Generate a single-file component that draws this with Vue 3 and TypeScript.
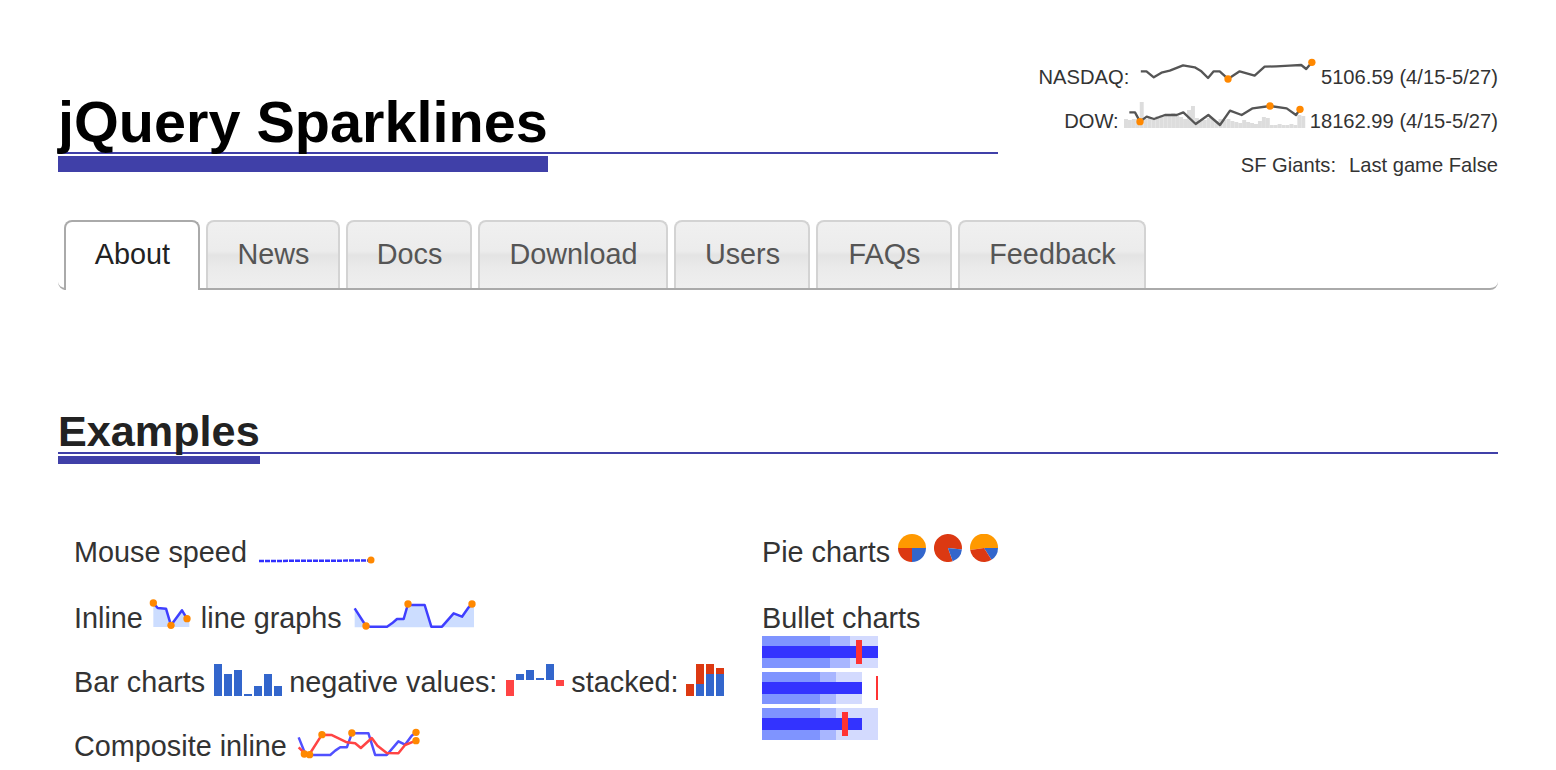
<script setup lang="ts">
type P = [number, number]
const toLine = (p: P[]) => p.map((q) => q.join(',')).join(' ')
const toFill = (p: P[], base: number, endX: number) =>
  `${p[0][0]},${base} ${toLine(p)} ${endX},${p[p.length - 1][1]} ${endX},${base}`

const tabs = [
  { label: 'About', width: 136 },
  { label: 'News', width: 134 },
  { label: 'Docs', width: 126 },
  { label: 'Download', width: 190 },
  { label: 'Users', width: 136 },
  { label: 'FAQs', width: 136 },
  { label: 'Feedback', width: 188 },
]

const nasdaq: P[] = [[333,62],[350,62],[372,80],[395,66],[420,60],[460,44],[495,50],[515,62],[535,82],[552,62],[570,62],[595,85],[630,62],[675,75],[705,48],[740,47],[780,45],[815,43],[830,55],[847,35]]
const dow: P[] = [[298,187],[315,187],[330,215],[350,200],[372,207],[405,195],[440,195],[460,187],[497,222],[535,195],[570,225],[600,182],[635,195],[668,175],[720,168],[770,175],[798,195],[810,178]]
const dowHeights = [9,8,9,9,26,9,10,8,12,13,14,14,15,12,11,9,18,22,10,8,8,10,9,7,9,8,9,7,6,5,8,6,5,4,7,11,10,3,3,4,3,3,4,3,13,12]
const dowBars = dowHeights.map((h, i) => ({ x: i * 3.94, y: 28 - h, h }))

const inline1: P[] = [[27,25],[40,40],[65,42],[80,92],[113,47],[128,72]]
const inline2: P[] = [[28,40],[62,93],[75,95],[125,95],[140,85],[155,72],[175,72],[188,27],[198,30],[238,30],[258,95],[290,95],[325,55],[350,65],[370,37],[380,27]]
const compBlue: P[] = [[25,50],[45,100],[60,103],[120,103],[135,90],[150,80],[170,80],[185,38],[235,38],[255,103],[290,103],[325,62],[345,72],[365,45],[378,35]]
const compRed: P[] = [[25,80],[45,100],[58,100],[95,42],[125,43],[170,65],[195,68],[212,82],[245,52],[262,75],[290,97],[325,98],[345,73],[378,60]]
const compDots: P[] = [[42,100],[58,102],[95,42],[185,37],[378,35],[378,60]]

const bars = [32,22,26,2,10,22,10]
const negBars = [
  { y: 16, h: 16, c: '#f44' },
  { y: 10, h: 6, c: '#36c' },
  { y: 6, h: 10, c: '#36c' },
  { y: 14, h: 2, c: '#36c' },
  { y: 0, h: 16, c: '#36c' },
  { y: 16, h: 6, c: '#f44' },
]
const stacked = [
  [{ y: 20, h: 12, c: '#dc3912' }],
  [{ y: 0, h: 20, c: '#dc3912' }, { y: 20, h: 12, c: '#36c' }],
  [{ y: 0, h: 10, c: '#dc3912' }, { y: 10, h: 22, c: '#36c' }],
  [{ y: 4, h: 6, c: '#dc3912' }, { y: 10, h: 22, c: '#36c' }],
]
const pies = [
  [
    { d: 'M14 14L0 14A14 14 0 0 1 28 14Z', c: '#f90' },
    { d: 'M14 14L28 14A14 14 0 0 1 14 28Z', c: '#36c' },
    { d: 'M14 14L14 28A14 14 0 0 1 0 14Z', c: '#dc3912' },
  ],
  [
    { d: 'M14 14L18.7 27.2A14 14 0 1 1 27.9 15.5Z', c: '#dc3912' },
    { d: 'M14 14L27.9 15.5A14 14 0 0 1 18.7 27.2Z', c: '#36c' },
  ],
  [
    { d: 'M14 14L0.2 16A14 14 0 1 1 28 14Z', c: '#f90' },
    { d: 'M14 14L28 14A14 14 0 0 1 21.5 25.8Z', c: '#36c' },
    { d: 'M14 14L21.5 25.8A14 14 0 0 1 0.2 16Z', c: '#dc3912' },
  ],
]
const bullets = [
  { dark: 68, mid: 88, light: 116, bar: 116, mark: 94, w: 6 },
  { dark: 58, mid: 74, light: 100, bar: 100, mark: 114, w: 2 },
  { dark: 58, mid: 74, light: 116, bar: 100, mark: 80, w: 6 },
]
</script>

<template>
  <div class="page">
    <header class="masthead">
      <div class="brand">
        <h1 class="rule-title big"><span>jQuery Sparklines</span></h1>
      </div>
      <div class="ticker">
        <div class="tick">
          <span>NASDAQ:</span>
          <svg class="spark nasdaq" viewBox="325 25 530 70">
            <polyline :points="toLine(nasdaq)" class="grey" />
            <circle cx="595" cy="85" r="11" class="dot" />
            <circle cx="847" cy="35" r="11" class="dot" />
          </svg>
          <span>5106.59 (4/15-5/27)</span>
        </div>
        <div class="tick">
          <span>DOW:</span>
          <span class="dow">
            <svg class="dow-bars" viewBox="0 0 180 28">
              <rect v-for="(b, i) in dowBars" :key="i" :x="b.x" :y="b.y" width="3.94" :height="b.h" fill="#ddd" />
            </svg>
            <svg class="dow-line" viewBox="282 150 540 84">
              <polyline :points="toLine(dow)" class="grey" />
              <circle cx="330" cy="215" r="11" class="dot" />
              <circle cx="720" cy="168" r="11" class="dot" />
              <circle cx="810" cy="178" r="11" class="dot" />
            </svg>
          </span>
          <span>18162.99 (4/15-5/27)</span>
        </div>
        <div class="tick">
          <span class="sf">SF Giants:</span>
          <span>Last game False</span>
        </div>
      </div>
    </header>

    <nav class="tabs">
      <a
        v-for="(t, i) in tabs"
        :key="t.label"
        class="tab"
        :class="{ active: i === 0 }"
        :style="{ width: t.width + 'px' }"
      >{{ t.label }}</a>
    </nav>

    <h2 class="rule-title mid"><span>Examples</span></h2>

    <section class="examples">
      <div class="col left">
        <div class="row r1">
          <span>Mouse speed</span>
          <svg class="mouse" viewBox="0 0 116 8">
            <line x1="0" y1="5" x2="112" y2="4.5" class="speed" />
            <circle cx="112" cy="4" r="3.5" class="dot" />
          </svg>
        </div>
        <div class="row r2">
          <span>Inline</span>
          <svg class="inl1" viewBox="20 10 120 96">
            <polygon :points="toFill(inline1, 97, 135)" fill="#cdf" />
            <polyline :points="toLine(inline1)" class="blue" />
            <circle cx="27" cy="25" r="11" class="dot" />
            <circle cx="80" cy="92" r="11" class="dot" />
            <circle cx="128" cy="72" r="11" class="dot" />
          </svg>
          <span>line graphs</span>
          <svg class="inl2" viewBox="20 15 375 90">
            <polygon :points="toFill(inline2, 97, 386)" fill="#cdf" />
            <polyline :points="toLine(inline2)" class="blue" />
            <circle cx="62" cy="93" r="11" class="dot" />
            <circle cx="188" cy="27" r="11" class="dot" />
            <circle cx="380" cy="27" r="11" class="dot" />
          </svg>
        </div>
        <div class="row r3">
          <span>Bar charts</span>
          <svg class="bars" viewBox="0 0 68 32">
            <rect v-for="(h, i) in bars" :key="i" :x="i * 10" :y="32 - h" width="8" :height="h" fill="#36c" />
          </svg>
          <span>negative values:</span>
          <svg class="neg" viewBox="0 0 58 32">
            <rect v-for="(b, i) in negBars" :key="i" :x="i * 10" :y="b.y" width="8" :height="b.h" :fill="b.c" />
          </svg>
          <span>stacked:</span>
          <svg class="stack" viewBox="0 0 38 32">
            <g v-for="(col, i) in stacked" :key="i">
              <rect v-for="(b, j) in col" :key="j" :x="i * 10" :y="b.y" width="8" :height="b.h" :fill="b.c" />
            </g>
          </svg>
        </div>
        <div class="row r4">
          <span>Composite inline</span>
          <svg class="comp" viewBox="20 25 370 90">
            <polyline :points="toLine(compBlue)" class="blue thin" />
            <polyline :points="toLine(compRed)" class="red" />
            <circle v-for="(d, i) in compDots" :key="i" :cx="d[0]" :cy="d[1]" r="11" class="dot" />
          </svg>
        </div>
      </div>
      <div class="col right">
        <div class="row r1 pies">
          <span>Pie charts</span>
          <svg v-for="(pie, i) in pies" :key="i" class="pie" viewBox="0 0 28 28">
            <path v-for="(s, j) in pie" :key="j" :d="s.d" :fill="s.c" />
          </svg>
        </div>
        <div class="bullet-head">Bullet charts</div>
        <div class="bullets">
          <div v-for="(b, i) in bullets" :key="i" class="bullet">
            <div class="range light" :style="{ width: b.light + 'px' }"></div>
            <div class="range midr" :style="{ width: b.mid + 'px' }"></div>
            <div class="range dark" :style="{ width: b.dark + 'px' }"></div>
            <div class="perf" :style="{ width: b.bar + 'px' }"></div>
            <div class="target" :style="{ left: b.mark + 'px', width: b.w + 'px' }"></div>
          </div>
        </div>
      </div>
    </section>
  </div>
</template>

<style>
html, body { margin: 0; overflow: hidden; background: #fff; }
</style>

<style scoped>
.page {
  box-sizing: border-box;
  width: 1556px;
  height: 770px;
  padding: 0 58px;
  overflow: hidden;
  font-family: "Liberation Sans", Arial, sans-serif;
  color: #333;
}
.masthead {
  display: flex;
  height: 220px;
  align-items: flex-start;
}
.brand { width: 940px; padding-top: 93px; }
.rule-title {
  margin: 0;
  position: relative;
  border-bottom: 2px solid #4040a8;
  font-weight: bold;
}
.rule-title span { display: inline-block; position: relative; }
.rule-title span::after {
  content: "";
  position: absolute;
  left: 0;
  right: 0;
  background: #4040a8;
}
.big { font-size: 57.6px; line-height: 59px; color: #000; }
.big span::after { top: 63px; height: 16px; }
.mid { font-size: 43.2px; line-height: 41px; color: #222; margin-top: 121px; }
.mid span::after { top: 45px; height: 8px; }

.ticker {
  flex: 1;
  padding-top: 55px;
  font-size: 20.16px;
  color: #333;
}
.tick {
  display: flex;
  justify-content: flex-end;
  align-items: center;
  height: 44px;
  gap: 5px;
  white-space: nowrap;
}
.sf { margin-right: 8px; }
.spark { display: block; overflow: visible; }
.nasdaq { width: 176.7px; height: 23.3px; margin: -12px 1px 0 4px; }
.dow { position: relative; display: block; width: 181px; height: 28px; margin-top: -14px; }
.dow-bars, .dow-line { position: absolute; left: 0; top: 0; width: 180px; height: 28px; overflow: visible; }
.grey { fill: none; stroke: #555; stroke-width: 7; stroke-linejoin: round; }
.dot { fill: #f80; }
svg { filter: blur(0.5px); flex: none; }

.tabs {
  display: flex;
  gap: 6px;
  box-sizing: border-box;
  height: 70px;
  padding-left: 6px;
  border-bottom: 2px solid #aaa;
  border-bottom-right-radius: 8px;
  border-bottom-left-radius: 8px;
}
.tab {
  box-sizing: border-box;
  height: 68px;
  border: 2px solid #d3d3d3;
  border-bottom: 0;
  border-radius: 8px 8px 0 0;
  font-size: 28.8px;
  line-height: 64px;
  text-align: center;
  text-indent: 1px;
  color: #555;
  background: linear-gradient(#f0f0f0 0%, #ececec 44%, #e4e4e4 50%, #eaeaea 68%, #efefef 100%);
}
.tab.active {
  height: 70px;
  border-color: #aaa;
  color: #222;
  background: #fff;
  position: relative;
}

.examples {
  display: flex;
  margin-top: 81px;
  font-size: 28.8px;
  color: #333;
}
.col { display: flex; flex-direction: column; }
.col.left { width: 688px; padding-left: 16px; box-sizing: border-box; }
.col.right { padding-left: 16px; }
.row {
  display: flex;
  align-items: center;
  white-space: nowrap;
  height: 34px;
}
.row.r1 { margin-bottom: 32px; }
.row.r2 { margin-bottom: 30px; }
.row.r3 { margin-bottom: 30px; }

.mouse { width: 116px; height: 8px; margin: 16px 0 0 12px; overflow: visible; }
.speed { stroke: #3030ff; stroke-width: 2.5; stroke-dasharray: 5 1; }
.inl1 { width: 40px; height: 32px; margin: -8px 10px 0 8px; overflow: visible; }
.inl2 { width: 125px; height: 30px; margin: -6px 0 0 10px; overflow: visible; }
.blue { fill: none; stroke: #3f3fff; stroke-width: 7.5; stroke-linejoin: round; }
.blue.thin { stroke: #5050ff; }
.red { fill: none; stroke: #f44; stroke-width: 7.5; stroke-linejoin: round; }
.bars { width: 68px; height: 32px; margin: 0 7px 4px 9px; }
.neg { width: 58px; height: 32px; margin: 0 7px 4px 9px; }
.stack { width: 38px; height: 32px; margin: 0 0 4px 7px; }
.comp { width: 123px; height: 30px; margin: -4px 0 0 10px; overflow: visible; }

.pies { gap: 8px; }
.pie { width: 28px; height: 28px; margin-top: -8px; }
.bullet-head { line-height: 34px; height: 35px; }
.bullets { display: flex; flex-direction: column; gap: 4px; }
.bullet { position: relative; width: 116px; height: 32px; }
.range { position: absolute; left: 0; top: 0; height: 32px; }
.light { background: #d3dafe; }
.midr { background: #a8b6ff; }
.dark { background: #7f94ff; }
.perf { position: absolute; left: 0; top: 10px; height: 12px; background: #33f; }
.target { position: absolute; top: 4px; height: 24px; background: #f33; }
</style>
